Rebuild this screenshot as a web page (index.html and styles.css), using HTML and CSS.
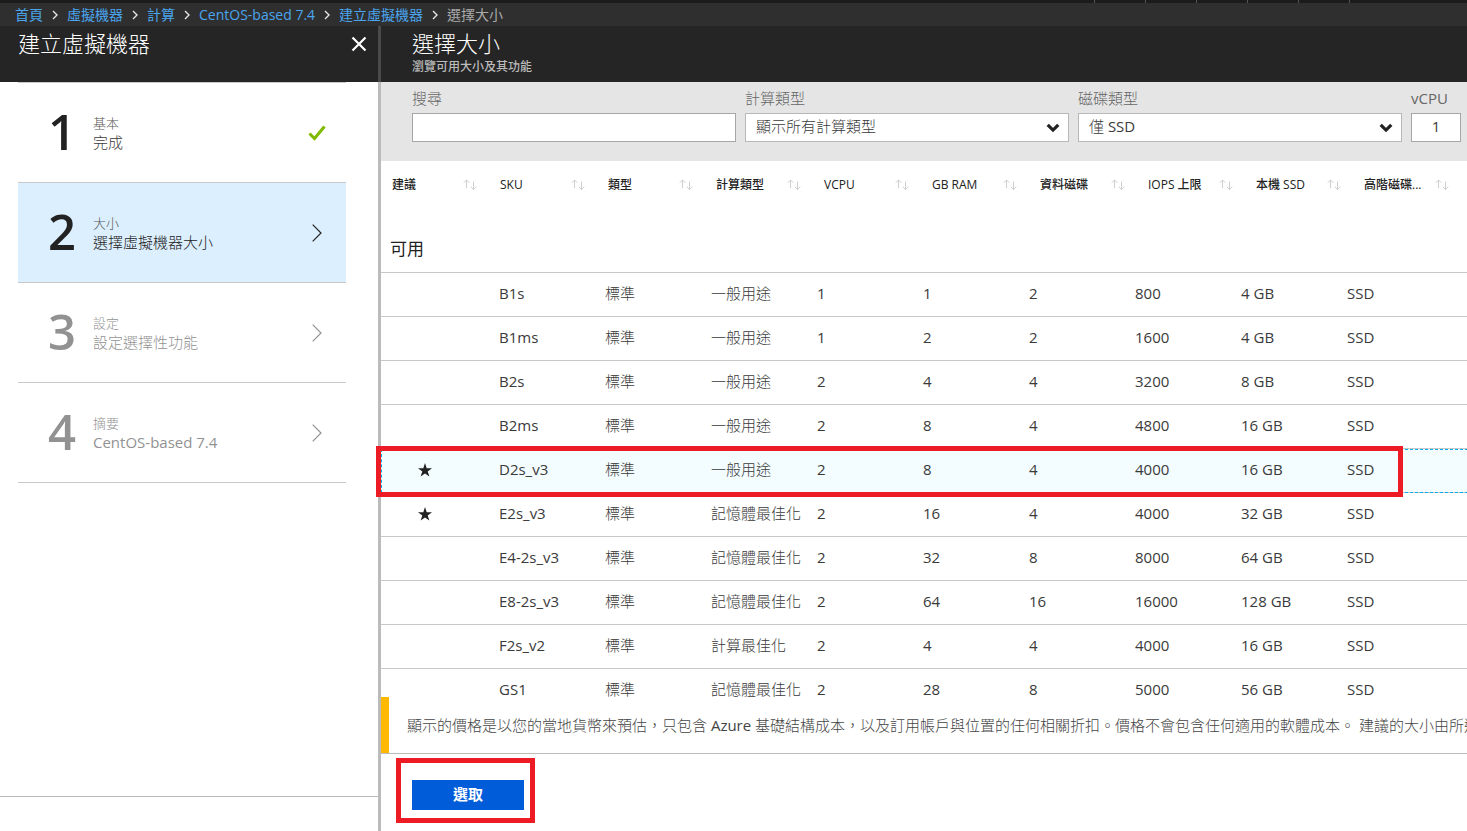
FILE: index.html
```html
<!DOCTYPE html>
<html lang="zh-Hant">
<head>
<meta charset="utf-8">
<title>選擇大小</title>
<link rel="stylesheet" href="styles.css">
</head>
<body>
<svg class="defs" aria-hidden="true">
  <symbol id="sep" viewBox="0 0 6 10"><path d="M1 1l4 4-4 4" fill="none" stroke="#e6e6e6" stroke-width="1.4"/></symbol>
  <symbol id="chev" viewBox="0 0 10 18"><path d="M.7.7L9 9 .7 17.3" fill="none" stroke="currentColor" stroke-width="1.2"/></symbol>
  <symbol id="drop" viewBox="0 0 14 10"><path d="M1.7 1.8L7 7.1l5.3-5.3" fill="none" stroke="#222" stroke-width="3.2"/></symbol>
  <symbol id="sort" viewBox="0 0 14 12"><path d="M3.5 9V1M.7 3.800L3.500 1l2.800 2.800M10.500 2.500v8M7.700 7.700l2.800 2.800 2.800-2.800" fill="none" stroke="#cecece" stroke-width="1"/></symbol>
  <symbol id="star" viewBox="0 0 14 14"><path d="M7 0l1.700 5.200H14L9.700 8.400l1.700 5.200L7 10.400l-4.400 3.200 1.700-5.200L0 5.200h5.300z" fill="#222"/></symbol>
</svg>
<div class="topbar"><i></i><i></i><i></i><i></i><i></i><i></i></div>
<nav class="crumbs" aria-label="導覽">
  <a href="#">首頁</a><svg><use href="#sep"/></svg>
  <a href="#">虛擬機器</a><svg><use href="#sep"/></svg>
  <a href="#">計算</a><svg><use href="#sep"/></svg>
  <a href="#">CentOS-based 7.4</a><svg><use href="#sep"/></svg>
  <a href="#">建立虛擬機器</a><svg><use href="#sep"/></svg>
  <span>選擇大小</span>
</nav>
<div class="blades">
  <section class="wizard">
    <header class="head">
      <h1>建立虛擬機器</h1>
      <button class="close" aria-label="關閉"><svg viewBox="0 0 16 16"><path d="M1.500 1.500l13 13M14.500 1.500l-13 13" stroke="#fff" stroke-width="2.200"/></svg></button>
    </header>
    <div class="steps">
      <button class="step">
        <span class="num">1</span><span class="txt"><small>基本</small><span>完成</span></span>
        <svg class="tick" viewBox="0 0 18 16"><path d="M1.500 8.500l5 5L16.500 1.500" fill="none" stroke="#7fba00" stroke-width="3"/></svg>
      </button>
      <button class="step current">
        <span class="num">2</span><span class="txt"><small>大小</small><span>選擇虛擬機器大小</span></span>
        <svg class="chev"><use href="#chev"/></svg>
      </button>
      <button class="step pending">
        <span class="num">3</span><span class="txt"><small>設定</small><span>設定選擇性功能</span></span>
        <svg class="chev"><use href="#chev"/></svg>
      </button>
      <button class="step pending">
        <span class="num">4</span><span class="txt"><small>摘要</small><span>CentOS-based 7.4</span></span>
        <svg class="chev"><use href="#chev"/></svg>
      </button>
    </div>
    <div class="wizard-foot"></div>
  </section>
  <section class="sizes">
    <header class="head">
      <h2>選擇大小</h2>
      <p>瀏覽可用大小及其功能</p>
    </header>
    <div class="content">
      <form class="filters">
        <div class="field"><label for="q">搜尋</label><input id="q" type="text"></div>
        <div class="field"><label for="type">計算類型</label>
          <div class="pick"><select id="type"><option>顯示所有計算類型</option></select><svg><use href="#drop"/></svg></div></div>
        <div class="field"><label for="disk">磁碟類型</label>
          <div class="pick"><select id="disk"><option>僅 SSD</option></select><svg><use href="#drop"/></svg></div></div>
        <div class="field"><label for="cpu">vCPU</label><input id="cpu" class="count" type="text" value="1"></div>
      </form>
      <div class="grid">
        <table>
          <thead><tr>
            <th>建議<svg><use href="#sort"/></svg></th>
            <th>SKU<svg><use href="#sort"/></svg></th>
            <th>類型<svg><use href="#sort"/></svg></th>
            <th>計算類型<svg><use href="#sort"/></svg></th>
            <th>VCPU<svg><use href="#sort"/></svg></th>
            <th>GB RAM<svg><use href="#sort"/></svg></th>
            <th>資料磁碟<svg><use href="#sort"/></svg></th>
            <th>IOPS 上限<svg><use href="#sort"/></svg></th>
            <th>本機 SSD<svg><use href="#sort"/></svg></th>
            <th>高階磁碟...<svg><use href="#sort"/></svg></th>
          </tr></thead>
          <tbody>
            <tr class="group"><th colspan="10">可用</th></tr>
            <tr><td></td><td>B1s</td><td>標準</td><td>一般用途</td><td>1</td><td>1</td><td>2</td><td>800</td><td>4 GB</td><td>SSD</td></tr>
            <tr><td></td><td>B1ms</td><td>標準</td><td>一般用途</td><td>1</td><td>2</td><td>2</td><td>1600</td><td>4 GB</td><td>SSD</td></tr>
            <tr><td></td><td>B2s</td><td>標準</td><td>一般用途</td><td>2</td><td>4</td><td>4</td><td>3200</td><td>8 GB</td><td>SSD</td></tr>
            <tr><td></td><td>B2ms</td><td>標準</td><td>一般用途</td><td>2</td><td>8</td><td>4</td><td>4800</td><td>16 GB</td><td>SSD</td></tr>
            <tr class="selected"><td><svg><use href="#star"/></svg><span class="mark row-mark"></span></td><td>D2s_v3</td><td>標準</td><td>一般用途</td><td>2</td><td>8</td><td>4</td><td>4000</td><td>16 GB</td><td>SSD</td></tr>
            <tr><td><svg><use href="#star"/></svg></td><td>E2s_v3</td><td>標準</td><td>記憶體最佳化</td><td>2</td><td>16</td><td>4</td><td>4000</td><td>32 GB</td><td>SSD</td></tr>
            <tr><td></td><td>E4-2s_v3</td><td>標準</td><td>記憶體最佳化</td><td>2</td><td>32</td><td>8</td><td>8000</td><td>64 GB</td><td>SSD</td></tr>
            <tr><td></td><td>E8-2s_v3</td><td>標準</td><td>記憶體最佳化</td><td>2</td><td>64</td><td>16</td><td>16000</td><td>128 GB</td><td>SSD</td></tr>
            <tr><td></td><td>F2s_v2</td><td>標準</td><td>計算最佳化</td><td>2</td><td>4</td><td>4</td><td>4000</td><td>16 GB</td><td>SSD</td></tr>
            <tr><td></td><td>GS1</td><td>標準</td><td>記憶體最佳化</td><td>2</td><td>28</td><td>8</td><td>5000</td><td>56 GB</td><td>SSD</td></tr>
          </tbody>
        </table>
      </div>
      <p class="notice">顯示的價格是以您的當地貨幣來預估，只包含 Azure 基礎結構成本，以及訂用帳戶與位置的任何相關折扣。價格不會包含任何適用的軟體成本。 建議的大小由所選</p>
      <footer class="actions">
        <div class="action"><button class="primary">選取</button><span class="mark button-mark"></span></div>
      </footer>
    </div>
  </section>
</div>
</body>
</html>
```
FILE: styles.css
```css
:root {
  --light: "Open Sans", "Noto Sans CJK TC Light", "Noto Sans CJK TC", sans-serif;
  --solid: "Open Sans", "Noto Sans CJK TC", sans-serif;
}

* { box-sizing: border-box; }

body {
  margin: 0;
  height: 100vh;
  display: flex;
  flex-direction: column;
  overflow: hidden;
  background: #fff;
  color: #3a3a3a;
  font: 15px/20px var(--light);
}

h1, h2, p { margin: 0; font-weight: inherit; }
button, input, select { font: inherit; color: inherit; border-radius: 0; }
button { border: 0; background: none; padding: 0; cursor: pointer; }
svg { display: block; flex: none; }
.defs { position: absolute; width: 0; height: 0; }

.topbar {
  height: 3px;
  flex: none;
  display: flex;
  justify-content: flex-end;
  gap: 50px;
  padding-right: 117px;
  background: #1b1b1b;
}
.topbar i { width: 1px; background: #555; }

.crumbs {
  height: 23px;
  flex: none;
  display: flex;
  align-items: center;
  gap: 9px;
  padding-left: 15px;
  background: #2f2f2f;
  color: #aaa;
  font-family: var(--solid);
  font-size: 14px;
  white-space: nowrap;
}
.crumbs a { color: #4aa5ee; text-decoration: none; }
.crumbs svg { width: 6px; height: 10px; }

.blades { flex: 1; min-height: 0; display: flex; }
.wizard { width: 378px; flex: none; display: flex; flex-direction: column; }
.sizes { flex: 1; min-width: 0; display: flex; flex-direction: column; }

.head { height: 56px; flex: none; background: #252525; color: #fff; }
.head h1, .head h2 { font-size: 22px; line-height: 32px; padding-top: 1px; }
.head p { font-family: var(--solid); font-size: 12px; line-height: 16px; font-weight: 500; color: #bbb; }
.wizard .head { display: flex; justify-content: space-between; align-items: flex-start; padding: 0 11px 0 18px; }
.sizes .head { border-left: 3px solid #4a4a4a; padding-left: 31px; }
.close { padding: 10px 0; }
.close svg { width: 16px; height: 16px; }

.steps { flex: 1; padding: 0 32px 0 18px; }
.step {
  width: 100%;
  height: 100px;
  display: flex;
  align-items: center;
  padding-right: 20px;
  border-top: 1px solid #c8c8c8;
  text-align: left;
}
.step:last-child { height: 101px; border-bottom: 1px solid #c8c8c8; }
.num { width: 75px; padding: 0 0 4px 13px; text-align: center; font-size: 49px; line-height: 60px; font-weight: 600; color: #222; }
.txt { flex: 1; display: flex; flex-direction: column; line-height: 19px; }
.txt small { font-size: 13px; color: #555; }
.current { background: #dceffe; color: #222; }
.pending, .pending small, .pending .num { color: #929292; }
.tick { width: 18px; height: 16px; }
.chev { width: 10px; height: 18px; margin-right: 4px; }
.wizard-foot { height: 35px; border-top: 1px solid #bbb; }

.content { flex: 1; min-height: 0; display: flex; flex-direction: column; border-left: 3px solid #bbb; }

.filters {
  display: grid;
  grid-template-columns: 1fr 1fr 1fr 50px;
  gap: 9px;
  padding: 6px 6px 19px 31px;
  background: #e5e5e5;
}
.field { display: flex; flex-direction: column; gap: 5px; min-width: 0; }
.field label { color: #666; }
.field input, .field select { width: 100%; height: 29px; border: 1px solid #a6a6a6; background: #fff; padding: 0 10px 3px; outline: 0; }
.field .count { text-align: center; padding: 0 0 3px; }
.pick { display: grid; align-items: center; }
.pick > * { grid-area: 1 / 1; }
.pick select { appearance: none; border-color: #b8b8b8; }
.pick svg { width: 14px; height: 10px; justify-self: end; margin-right: 9px; pointer-events: none; }

.grid { flex: 1; min-height: 0; }
table, thead, tbody { display: block; }
tr { display: grid; grid-template-columns: repeat(10, 1fr); align-items: center; }
thead tr { height: 48px; padding-right: 6px; }
thead th {
  display: flex;
  justify-content: space-between;
  align-items: center;
  padding: 0 12px 0 11px;
  font-family: var(--solid);
  font-size: 12px;
  font-weight: 500;
  color: #222;
  white-space: nowrap;
}
thead svg { width: 14px; height: 12px; }
tbody tr { height: 44px; padding-right: 26px; border-top: 1px solid #c8c8c8; }
tbody td { padding: 0 0 3px 12px; white-space: nowrap; }
tbody td:first-child { padding-bottom: 2px; }
tbody td svg { width: 14px; height: 14px; margin-left: 25px; }
tbody .group { display: block; height: 63px; border: 0; padding: 29px 9px 0; }
.group th { display: block; padding: 0; text-align: left; font-size: 17px; line-height: 22px; color: #222; font-family: var(--solid); font-weight: 400; }
.selected { position: relative; background: #f3fcfe; }
.selected::after { content: ""; position: absolute; inset: 0 -1px -1px 0; border: 1px dashed #00abec; }

.mark { position: absolute; border: 5px solid #ed1c24; pointer-events: none; z-index: 1; }
.row-mark { inset: -3px 64px -5px -5px; }
.button-mark { inset: -22px -11px -13px -16px; }

.notice {
  flex: none;
  height: 56px;
  padding: 18px 0 0 18px;
  border-left: 8px solid #ffb900;
  color: #444;
  white-space: nowrap;
  overflow: hidden;
}
.actions { flex: none; height: 78px; padding: 26px 31px 0; border-top: 1px solid #bbb; display: flex; align-items: flex-start; }
.action { position: relative; }
.primary { display: block; width: 112px; height: 30px; padding-bottom: 2px; background: #015cda; color: #fff; font-family: var(--solid); font-weight: 700; }
```
